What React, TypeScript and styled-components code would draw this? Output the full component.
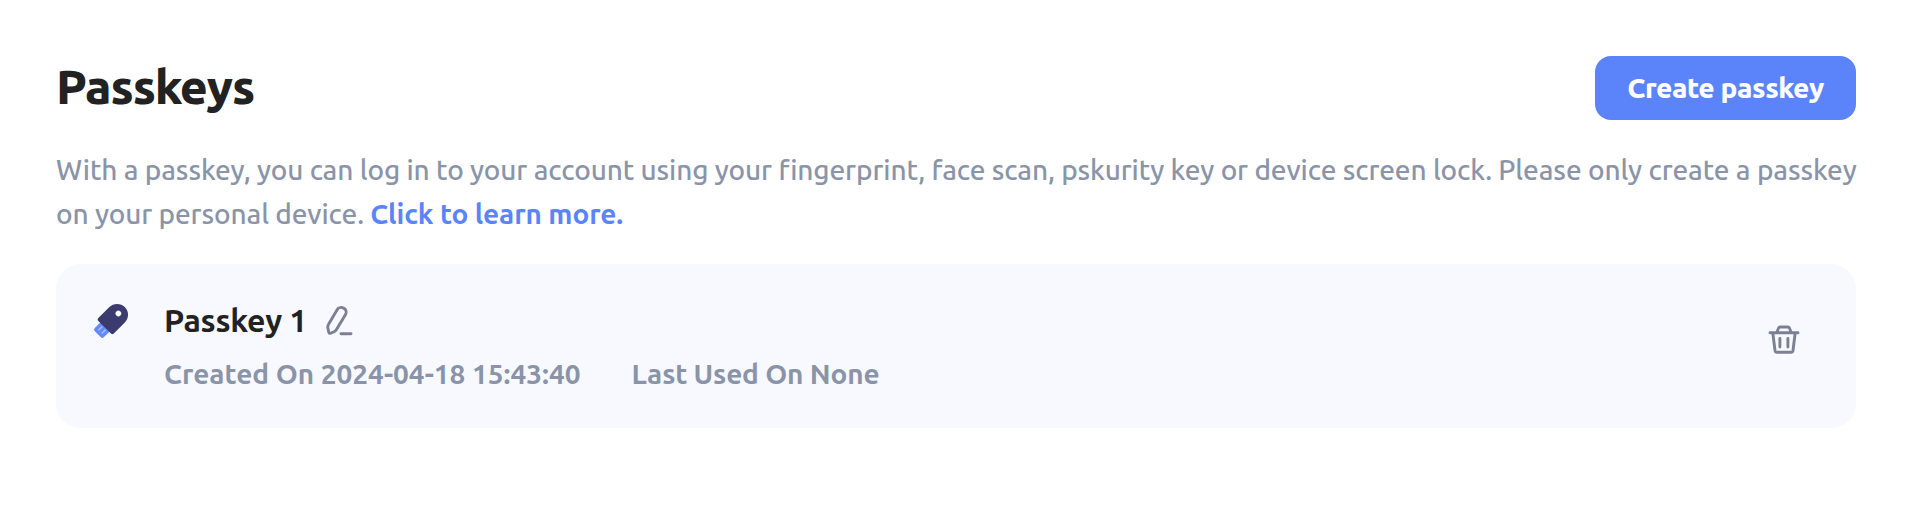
import React from "react";
import styled, { createGlobalStyle } from "styled-components";

const Global = createGlobalStyle`
  *, *::before, *::after { box-sizing: border-box; }
  body { margin: 0; background: #fff; font-family: Ubuntu, "Noto Sans", "Open Sans", sans-serif; }
`;

const Page = styled.main`
  min-height: 518px;
  padding: 56px 58px 0 56px;
`;

const Header = styled.header`
  display: flex;
  align-items: center;
  justify-content: space-between;
  height: 64px;
`;

const Title = styled.h1`
  margin: -4px 0 0;
  font-size: 48px;
  line-height: 64px;
  font-weight: 800;
  letter-spacing: -1.05px;
  color: #222;
`;

const PrimaryButton = styled.button`
  width: 261px;
  height: 64px;
  padding: 0;
  border: 0;
  border-radius: 16px;
  background: #5c84fa;
  color: #fff;
  font: 800 28px/64px Ubuntu, "Noto Sans", sans-serif;
  letter-spacing: -0.45px;
  white-space: nowrap;
`;

const Description = styled.p`
  margin: 28px 0 0;
  font-size: 28px;
  line-height: 44px;
  font-weight: 500;
  letter-spacing: -0.112px;
  color: #8a94a9;
`;

const DescriptionLine = styled.span`
  display: block;
  white-space: nowrap;
`;

const LearnMore = styled.a`
  color: #5c84fa;
  font-weight: 600;
`;

const Card = styled.section`
  display: flex;
  align-items: flex-start;
  height: 164px;
  margin-top: 28px;
  padding: 36px 56px 0 36px;
  border-radius: 24px;
  background: #f8f9fe;
`;

const KeyIcon = styled.svg`
  flex: none;
  width: 40px;
  height: 40px;
  margin-right: 32px;
`;

const Details = styled.div`
  flex: 1;
`;

const NameRow = styled.div`
  display: flex;
  align-items: center;
  height: 40px;
  gap: 16px;
`;

const Name = styled.span`
  width: 144px;
  font-size: 32px;
  font-weight: 600;
  letter-spacing: -0.25px;
  white-space: nowrap;
  color: #222;
`;

const LineIcon = styled.svg`
  flex: none;
  width: 32px;
  height: 32px;
  fill: none;
  stroke: #7b8193;
  stroke-width: 2.9;
  stroke-linecap: round;
  stroke-linejoin: round;
`;

const Meta = styled.div`
  display: flex;
  gap: 51px;
  margin-top: 12px;
  font-size: 28px;
  line-height: 44px;
  font-weight: 600;
  color: #8a94a9;
`;

const MetaItem = styled.span<{ $tight?: boolean }>`
  letter-spacing: ${(p) => (p.$tight ? "-0.15px" : "normal")};
  white-space: nowrap;
`;

const DeleteButton = styled.button`
  display: flex;
  margin: 24px 0 0;
  padding: 0;
  border: 0;
  background: none;
`;

export default function App() {
  return (
    <>
      <Global />
      <Page>
        <Header>
          <Title>Passkeys</Title>
          <PrimaryButton>Create passkey</PrimaryButton>
        </Header>
        <Description>
          <DescriptionLine>
            With a passkey, you can log in to your account using your fingerprint, face scan, pskurity key or device screen lock. Please only create a passkey
          </DescriptionLine>
          <DescriptionLine>
            on your personal device. <LearnMore>Click to learn more.</LearnMore>
          </DescriptionLine>
        </Description>
        <Card>
          <KeyIcon viewBox="0 0 40 40">
            <g transform="translate(-0.4 0.4) rotate(45 25.5 14.4)">
              <rect x="19" y="29" width="13" height="12.8" rx="2.4" fill="#6389ff" />
              <path d="M23.2 33v5.500M27.800 33v5.500" stroke="#a3b9ff" strokeWidth="1.6" />
              <path d="M14.600 14.400a10.900 10.900 0 0 1 21.800 0V30a2 2 0 0 1-2 2H16.600a2 2 0 0 1-2-2Z" fill="#3c3b70" />
              <circle cx="25.500" cy="12.600" r="2.800" fill="#fff" />
            </g>
          </KeyIcon>
          <Details>
            <NameRow>
              <Name>Passkey 1</Name>
              <LineIcon viewBox="0 0 32 32">
                <path d="M4.700 20 13.300 5.500C16 1.200 24.500 4.500 21.700 10.300L12.300 25.800Q11.700 26.900 10.500 27.500L6.700 29.200Q5 29.700 4.700 28L3.700 23.300Q3.700 21.600 4.700 20Z" />
                <path d="M17 29.700H27" />
              </LineIcon>
            </NameRow>
            <Meta>
              <MetaItem>Created On 2024-04-18 15:43:40</MetaItem>
              <MetaItem $tight>Last Used On None</MetaItem>
            </Meta>
          </Details>
          <DeleteButton aria-label="Delete passkey">
            <LineIcon viewBox="0 0 32 32">
              <path d="M2 8.700H30M8.700 8.700 10.700 3.700Q11 3 12 3H20Q21 3 21.300 3.700L23.300 8.700M4.800 8.700 7 26.500Q7.300 28.200 9 28.200H23Q24.700 28.200 25 26.500L27.200 8.700M11.900 14.500V23M19.900 14.500V23" />
            </LineIcon>
          </DeleteButton>
        </Card>
      </Page>
    </>
  );
}
